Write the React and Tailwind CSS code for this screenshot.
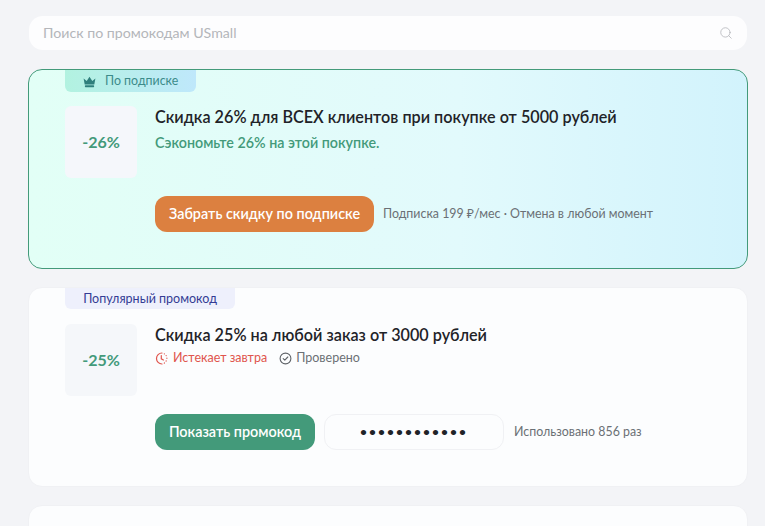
import { Search } from 'lucide-react'

function Crown() {
  return (
    <svg width="13" height="12" viewBox="0 0 13 12" fill="#2f7f7c">
      <path d="M0.6 2.6l3.1 2.4L6.5 0.8l2.8 4.2 3.1-2.4-1.1 6H1.7z" />
      <rect x="1.9" y="9.2" width="9.2" height="2" rx="0.6" />
    </svg>
  )
}

function ExpiresIcon() {
  return (
    <svg width="13" height="13" viewBox="0 0 13 13" fill="none" stroke="#e0554d" strokeWidth="1.2" strokeLinecap="round">
      <path d="M7 1a5.5 5.5 0 1 0 0 11" />
      <path d="M6.3 3.6v3.2l2.1 1.2" />
      <path d="M9.3 1.8l.1.1M11.1 3.6l.1.1M11.9 6.2v.1M11.2 8.9l-.1.1M9.4 11l-.1.1" />
    </svg>
  )
}

function CheckIcon() {
  return (
    <svg width="13" height="13" viewBox="0 0 13 13" fill="none" stroke="#5f6368" strokeWidth="1.1" strokeLinecap="round" strokeLinejoin="round">
      <circle cx="6.5" cy="6.5" r="5.4" />
      <path d="M4.2 6.7l1.6 1.5 3-3.2" />
    </svg>
  )
}

export default function App() {
  return (
    <div className="h-[526px] overflow-hidden bg-[#f3f4f7] pl-[29px] pr-[18px] pt-4 font-['Lato','Noto_Sans',sans-serif] text-[#1f2328]">

      {/* search */}
      <div className="flex h-[34px] items-center justify-between rounded-[14px] bg-[#fdfdfe] pl-[14px] pr-[14px]">
        <span className="text-[14.2px] text-[#b4b6ba]">Поиск по промокодам USmall</span>
        <Search size={14} strokeWidth={1.4} className="text-[#b4b6ba]" />
      </div>

      {/* subscription card */}
      <div className="mx-[-1px] mt-[19px] h-[200px] rounded-[14px] border border-[#439a7a] bg-gradient-to-r from-[#e2fff6] via-[#e2fafc] via-60% to-[#d2f3fc] pl-9">
        <div className="flex h-[22px] w-[131px] items-center gap-[9px] rounded-b-[6px] bg-gradient-to-r from-[#b2f2e0] to-[#bfe8fb] pl-[18px] pt-[1px] text-[12.4px] text-[#3c8b8a]">
          <Crown />
          <span>По подписке</span>
        </div>
        <div className="mt-[14px] flex gap-[18px]">
          <div className="flex h-[72px] w-[72px] items-center justify-center rounded-[6px] bg-[#f5f7fb] text-[16px] font-bold text-[#439a7a]">-26%</div>
          <div>
            <div className="text-[16.2px] leading-[22px] font-semibold">Скидка 26% для ВСЕХ клиентов при покупке от 5000 рублей</div>
            <div className="mt-[6px] text-[14.3px] leading-[18px] font-semibold text-[#439a7a]">Сэкономьте 26% на этой покупке.</div>
          </div>
        </div>
        <div className="mt-[18px] flex items-center gap-[9px] pl-[90px]">
          <button className="h-9 w-[219px] rounded-[12px] bg-[#dc8040] text-[14.4px] font-semibold text-white">Забрать скидку по подписке</button>
          <span className="text-[12.4px] text-[#6b7075]">Подписка 199 ₽/мес · Отмена в любой момент</span>
        </div>
      </div>

      {/* popular promo */}
      <div className="mx-[-1px] mt-[18px] h-[200px] rounded-[14px] border border-[#f0f1f4] bg-[#fcfdfe] pl-9">
        <div className="flex h-[21px] w-[170px] items-center justify-center rounded-b-[6px] bg-[#eef0fc] pt-[2px] text-[12.5px] text-[#343c94]">Популярный промокод</div>
        <div className="mt-[15px] flex gap-[18px]">
          <div className="flex h-[72px] w-[72px] items-center justify-center rounded-[6px] bg-[#f5f7fa] text-[16px] font-bold text-[#439a7a]">-25%</div>
          <div>
            <div className="text-[16.2px] leading-[22px] font-semibold">Скидка 25% на любой заказ от 3000 рублей</div>
            <div className="mt-[3px] flex items-center text-[12.5px] leading-[18px]">
              <ExpiresIcon />
              <span className="ml-[5px] text-[#e0554d]">Истекает завтра</span>
              <span className="ml-[12px]"><CheckIcon /></span>
              <span className="ml-[4px] text-[#6b7075]">Проверено</span>
            </div>
          </div>
        </div>
        <div className="mt-[18px] flex items-center pl-[90px]">
          <button className="h-9 w-[160px] rounded-[12px] bg-[#439a7a] text-[14.4px] font-semibold text-white">Показать промокод</button>
          <div className="ml-[9px] flex h-9 w-[180px] items-center justify-center rounded-[12px] border border-[#f0f1f4] text-[12px] font-bold tracking-[2.05px]">••••••••••••</div>
          <span className="ml-[10px] text-[12.4px] text-[#6b7075]">Использовано 856 раз</span>
        </div>
      </div>

      {/* next card, cut off by the window */}
      <div className="mx-[-1px] mt-[18px] h-[60px] rounded-[14px] border border-[#f0f1f4] bg-[#fcfdfe]" />
    </div>
  )
}
